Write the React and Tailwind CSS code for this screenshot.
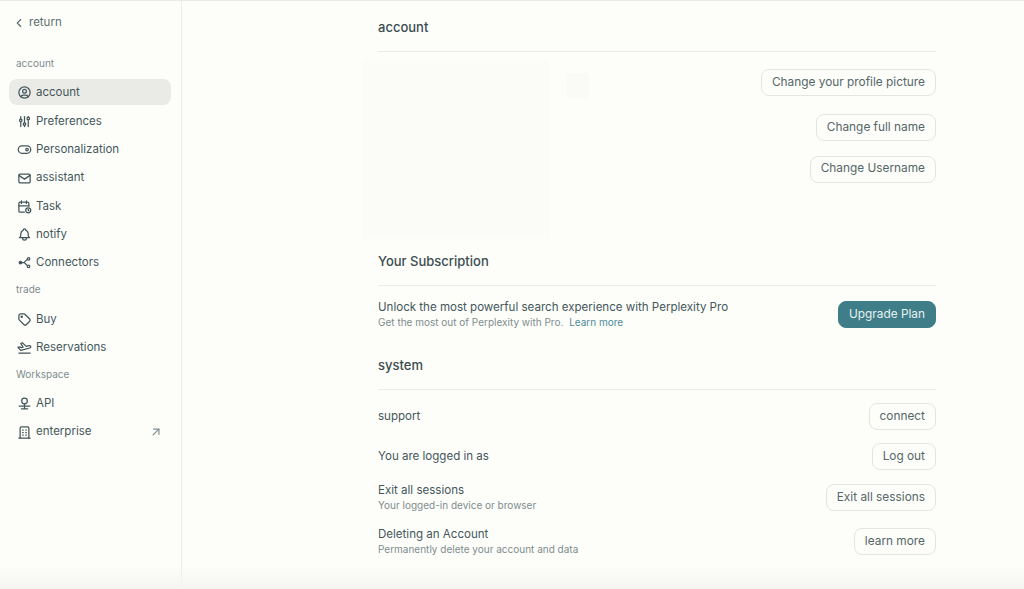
import React from "react";
import { TbChevronLeft, TbUserCircle, TbAdjustments, TbToggleRight, TbMail, TbCalendarTime, TbBell, TbTag, TbPlaneDeparture, TbBuilding, TbArrowUpRight } from "react-icons/tb";

const Connect = (p) => (
  <svg viewBox="0 0 24 24" fill="none" stroke="currentColor" strokeWidth="2" strokeLinecap="round" strokeLinejoin="round" {...p}>
    <circle cx="5.5" cy="12" r="2" fill="currentColor" />
    <circle cx="18.5" cy="6" r="2" />
    <circle cx="18.5" cy="18" r="2" />
    <path d="M7.5 12h4l5-5M11.5 12l5 5" />
  </svg>
);
const Api = (p) => (
  <svg viewBox="0 0 24 24" fill="none" stroke="currentColor" strokeWidth="2" strokeLinecap="round" strokeLinejoin="round" {...p}>
    <path d="M12 3.5a4.5 4.5 0 0 1 4.5 4.5c0 2.5-2 4.5-4.5 4.5S7.500 10.500 7.500 8A4.500 4.500 0 0 1 12 3.500z" />
    <path d="M12 12.500v7.500M3.500 16h17M7 20.500h10" />
  </svg>
);

const Label = ({ children, className = "" }) => (
  <div className={`h-[26px] flex items-center pl-[16px] text-[10px] text-[#7e8c8e] ${className}`}>{children}</div>
);
const Item = ({ icon: I, children, active, right }) => (
  <div className={`h-[26.3px] ml-[9px] mr-[10px] pl-[8px] pr-[8px] flex items-center gap-[4px] rounded-lg text-[11.5px] text-[#44565a] ${active ? "bg-[#eaebe6] -mt-[1px] mb-[3px] pt-[1px]" : "mb-[2px]"}`}>
    <I className="w-[15px] h-[15px] shrink-0" />
    <span className="flex-1">{children}</span>
    {right}
  </div>
);
const Btn = ({ children, primary }) => (
  <button className={`h-[27px] px-[10px] rounded-lg text-[11.85px] whitespace-nowrap border ${primary ? "bg-[#3f7e89] border-[#3f7e89] text-[#e6f0ef]" : "bg-[#fdfefa] border-[#e3e5e0] text-[#556669]"}`}>
    {children}
  </button>
);
const Heading = ({ children, className = "h-[47px]" }) => (
  <div className={`${className} pb-[16px] flex items-end border-b border-[#ecedE9] text-[13px] leading-[16px] font-medium text-[#3b4c50]`}>{children}</div>
);
const Row = ({ title, sub, action, className = "" }) => (
  <div className={`flex items-center justify-between ${className}`}>
    <div className="flex flex-col">
      <div className="text-[11.55px] leading-[15px] text-[#44565a]">{title}</div>
      {sub && <div className="text-[10px] leading-[14px] text-[#7e8c8e]">{sub}</div>}
    </div>
    {action}
  </div>
);

export default function App() {
  return (
    <div className="relative w-[1024px] h-[589px] overflow-hidden flex bg-[#fdfefa] border-t border-[#eaebe7]" style={{ fontFamily: "Inter, sans-serif" }}>
      <aside className="w-[182px] shrink-0 border-r border-[#ecedE9] flex flex-col">
        <div className="h-[44px] pl-[12px] flex items-center gap-[3px] text-[11.5px] text-[#5f6f72]">
          <TbChevronLeft className="w-[14px] h-[14px]" /> return
        </div>
        <Label className="mt-[5px] mb-[4px]">account</Label>
        <Item icon={TbUserCircle} active>account</Item>
        <Item icon={TbAdjustments}>Preferences</Item>
        <Item icon={TbToggleRight}>Personalization</Item>
        <Item icon={TbMail}>assistant</Item>
        <Item icon={TbCalendarTime}>Task</Item>
        <Item icon={TbBell}>notify</Item>
        <Item icon={Connect}>Connectors</Item>
        <Label className="-mt-[2px] mb-[4px]">trade</Label>
        <Item icon={TbTag}>Buy</Item>
        <Item icon={TbPlaneDeparture}>Reservations</Item>
        <Label className="-mt-[1px] mb-[3px]">Workspace</Label>
        <Item icon={Api}>API</Item>
        <Item icon={TbBuilding} right={<TbArrowUpRight className="w-[14px] h-[14px] text-[#7e8c8e]" />}>enterprise</Item>
      </aside>
      <main className="w-[558px] ml-[196px] flex flex-col">
        <Heading className="h-[51px]">account</Heading>
        <div className="flex justify-between h-[187px] pt-[8px]">
          <div className="flex -ml-[16px] gap-[18px]">
            <div className="w-[187px] h-[179px] bg-[#fbfcf8]" />
            <div className="w-[22px] h-[26px] mt-[13px] bg-[#fafbf7]" />
          </div>
          <div className="flex flex-col items-end pt-[9px]">
            <Btn>Change your profile picture</Btn>
            <div className="mt-[17px]"><Btn>Change full name</Btn></div>
            <div className="mt-[13px]"><Btn>Change Username</Btn></div>
          </div>
        </div>
        <Heading>Your Subscription</Heading>
        <Row
          className="mt-[14px]"
          title="Unlock the most powerful search experience with Perplexity Pro"
          sub={<>Get the most out of Perplexity with Pro. <span className="ml-[3px] text-[#4d8a96]">Learn more</span></>}
          action={<Btn primary>Upgrade Plan</Btn>}
        />
        <Heading className="h-[47px] mt-[14px]">system</Heading>
        <Row className="mt-[13px]" title="support" action={<Btn>connect</Btn>} />
        <Row className="mt-[13px]" title="You are logged in as" action={<Btn>Log out</Btn>} />
        <Row className="mt-[13px]" title="Exit all sessions" sub="Your logged-in device or browser" action={<Btn>Exit all sessions</Btn>} />
        <Row className="mt-[15px]" title="Deleting an Account" sub="Permanently delete your account and data" action={<Btn>learn more</Btn>} />
      </main>
      <div className="absolute left-0 right-0 bottom-0 h-[24px] bg-gradient-to-b from-transparent to-[#f5f6f2] pointer-events-none" />
    </div>
  );
}
